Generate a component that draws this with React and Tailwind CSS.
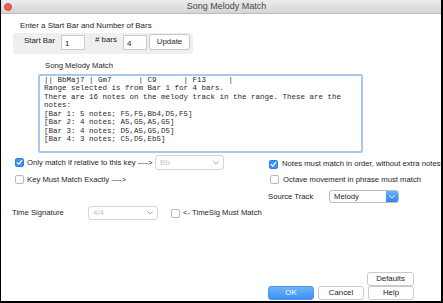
import React from "react";

const Chevron = ({ color = "#9a9a9a" }) => (
  <svg width="6" height="4" viewBox="0 0 6 4" className="block">
    <path d="M0.6 0.6 L3 3 L5.4 0.6" fill="none" stroke={color} strokeWidth="1" strokeLinecap="round" strokeLinejoin="round" />
  </svg>
);

const Check = ({ checked }) =>
  checked ? (
    <div className="w-[9px] h-[9px] rounded-[2px] bg-[#3e95f6] border border-[#2f7fe0] flex items-center justify-center shrink-0">
      <svg width="7" height="7" viewBox="0 0 7 7" className="block">
        <path d="M1.2 3.6 L2.8 5.2 L5.8 1.4" fill="none" stroke="#ffffff" strokeWidth="1.2" strokeLinecap="round" strokeLinejoin="round" />
      </svg>
    </div>
  ) : (
    <div className="w-[9px] h-[9px] rounded-[2px] bg-white border border-[#b9b9b9] shrink-0" />
  );

const Btn = ({ children, w = "w-[46px]", primary = false }) => (
  <div
    className={
      w +
      " h-[14px] rounded-[3px] flex items-center justify-center text-[7.8px] leading-[10px] " +
      (primary
        ? "bg-gradient-to-b from-[#6db4fb] to-[#3c8ff6] text-white border border-[#4a97f0]"
        : "bg-white text-[#222] border border-[#cacaca]")
    }
  >
    {children}
  </div>
);

const lines = [
  "|| BbMaj7 | Gm7      | C9      | F13     |",
  "Range selected is from Bar 1 for 4 bars.",
  "There are 16 notes on the melody track in the range. These are the",
  "notes:",
  "[Bar 1: 5 notes; F5,F5,Bb4,D5,F5]",
  "[Bar 2: 4 notes; A5,G5,A5,G5]",
  "[Bar 3: 4 notes; D5,A5,G5,D5]",
  "[Bar 4: 3 notes; C5,D5,Eb5]",
];

export default function App() {
  return (
    <div
      className="w-[443px] h-[303px] bg-white border-l border-r-2 border-b-2 border-black flex flex-col overflow-hidden text-[7.7px] leading-[10px] text-[#1e1e1e] whitespace-nowrap"
      style={{ fontFamily: '"Liberation Sans", Arial, sans-serif' }}
    >
      {/* Title bar */}
      <div className="h-[14px] shrink-0 flex items-center bg-gradient-to-b from-[#ececec] to-[#d5d5d5] border-b border-[#bdbdbd]">
        <div className="ml-[3px] w-[8px] h-[8px] rounded-full bg-[#ee5d55] border border-[#d6463f]" />
        <div className="flex-1 text-center text-[9px] leading-[11px] text-[#4a4a4a]">Song Melody Match</div>
      </div>

      {/* Start bar section */}
      <div className="mt-[7px] pl-[19px] text-[7.9px]">Enter a Start Bar and Number of Bars</div>
      <div className="mt-[2px] ml-[12px] w-[180px] h-[21px] bg-[#efefef] rounded-[3px] flex items-start pt-[2px] pl-[11px] text-[7.9px]">
        <span className="w-[37px] mt-[1px]">Start Bar</span>
        <div className="w-[24px] h-[15px] bg-white border border-[#cbcbcb] flex items-center pl-[3px] pt-[2px]">1</div>
        <span className="ml-[10px] w-[28px]"># bars</span>
        <div className="w-[24px] h-[15px] bg-white border border-[#cbcbcb] flex items-center pl-[3px] pt-[2px]">4</div>
        <div className="ml-[2px] -mt-[1px] w-[41px] h-[16px] bg-white border border-[#c8c8c8] rounded-[3px] flex items-center justify-center">
          Update
        </div>
      </div>

      {/* Song Melody Match text */}
      <div className="mt-[7px] pl-[44px]">Song Melody Match</div>
      <div className="mt-[3px] ml-[37px] w-[325px] h-[79px] border-2 border-[#a9c8ee] rounded-[2px] pl-[4px] overflow-hidden">
        <div
          className="text-[7.5px] leading-[8.45px] text-[#2a2a2a] whitespace-pre"
          style={{ fontFamily: '"Liberation Mono", "Courier New", monospace' }}
        >
          {lines.join("\n")}
        </div>
      </div>

      {/* Row A */}
      <div className="mt-[2px] h-[15px] flex items-center">
        <div className="pl-[14px] flex items-center">
          <Check checked />
          <span className="ml-[3px] w-[128px]">Only match if relative to this key ----&gt;</span>
          <div className="w-[69px] h-[15px] bg-white border border-[#d6d6d6] rounded-[3px] flex items-center justify-between pl-[4px] pr-[4px] text-[#c2c2c2]">
            <span>Bb</span>
            <Chevron color="#a8a8a8" />
          </div>
        </div>
        <div className="ml-[45px] mt-[3px] flex items-center">
          <Check checked />
          <span className="ml-[4px]">Notes must match in order, without extra notes</span>
        </div>
      </div>

      {/* Row B */}
      <div className="mt-[5px] h-[9px] flex items-center">
        <div className="pl-[14px] w-[255px] flex items-center">
          <Check />
          <span className="ml-[3px]">Key Must Match Exactly ----&gt;</span>
        </div>
        <div className="ml-[14px] flex items-center">
          <Check />
          <span className="ml-[4px]">Octave movement in phrase must match</span>
        </div>
      </div>

      {/* Row C: Source track */}
      <div className="mt-[6px] h-[13px] flex items-center pl-[267px]">
        <span className="w-[61px]">Source Track</span>
        <div className="w-[70px] h-[13px] bg-white border border-[#bcbcbc] rounded-[3px] flex items-stretch overflow-hidden">
          <span className="flex-1 pl-[4px] flex items-center">Melody</span>
          <div className="w-[12px] bg-gradient-to-b from-[#69b0fa] to-[#2f86f3] flex items-center justify-center">
            <Chevron color="#ffffff" />
          </div>
        </div>
      </div>

      {/* Row D: Time signature */}
      <div className="mt-[3px] h-[14px] flex items-center pl-[11px]">
        <span className="w-[76px]">Time Signature</span>
        <div className="w-[70px] h-[14px] bg-white border border-[#d6d6d6] rounded-[3px] flex items-center justify-between pl-[4px] pr-[4px] text-[#c2c2c2]">
          <span>4/4</span>
          <Chevron color="#a8a8a8" />
        </div>
        <div className="ml-[13px]">
          <Check />
        </div>
        <span className="ml-[3px]">&lt;- TimeSig Must Match</span>
      </div>

      {/* Buttons */}
      <div className="mt-[52px] flex justify-end pr-[27px]">
        <Btn w="w-[47px]">Defaults</Btn>
      </div>
      <div className="flex justify-end pr-[27px] gap-[4px]">
        <Btn primary>OK</Btn>
        <Btn>Cancel</Btn>
        <Btn>Help</Btn>
      </div>
    </div>
  );
}
